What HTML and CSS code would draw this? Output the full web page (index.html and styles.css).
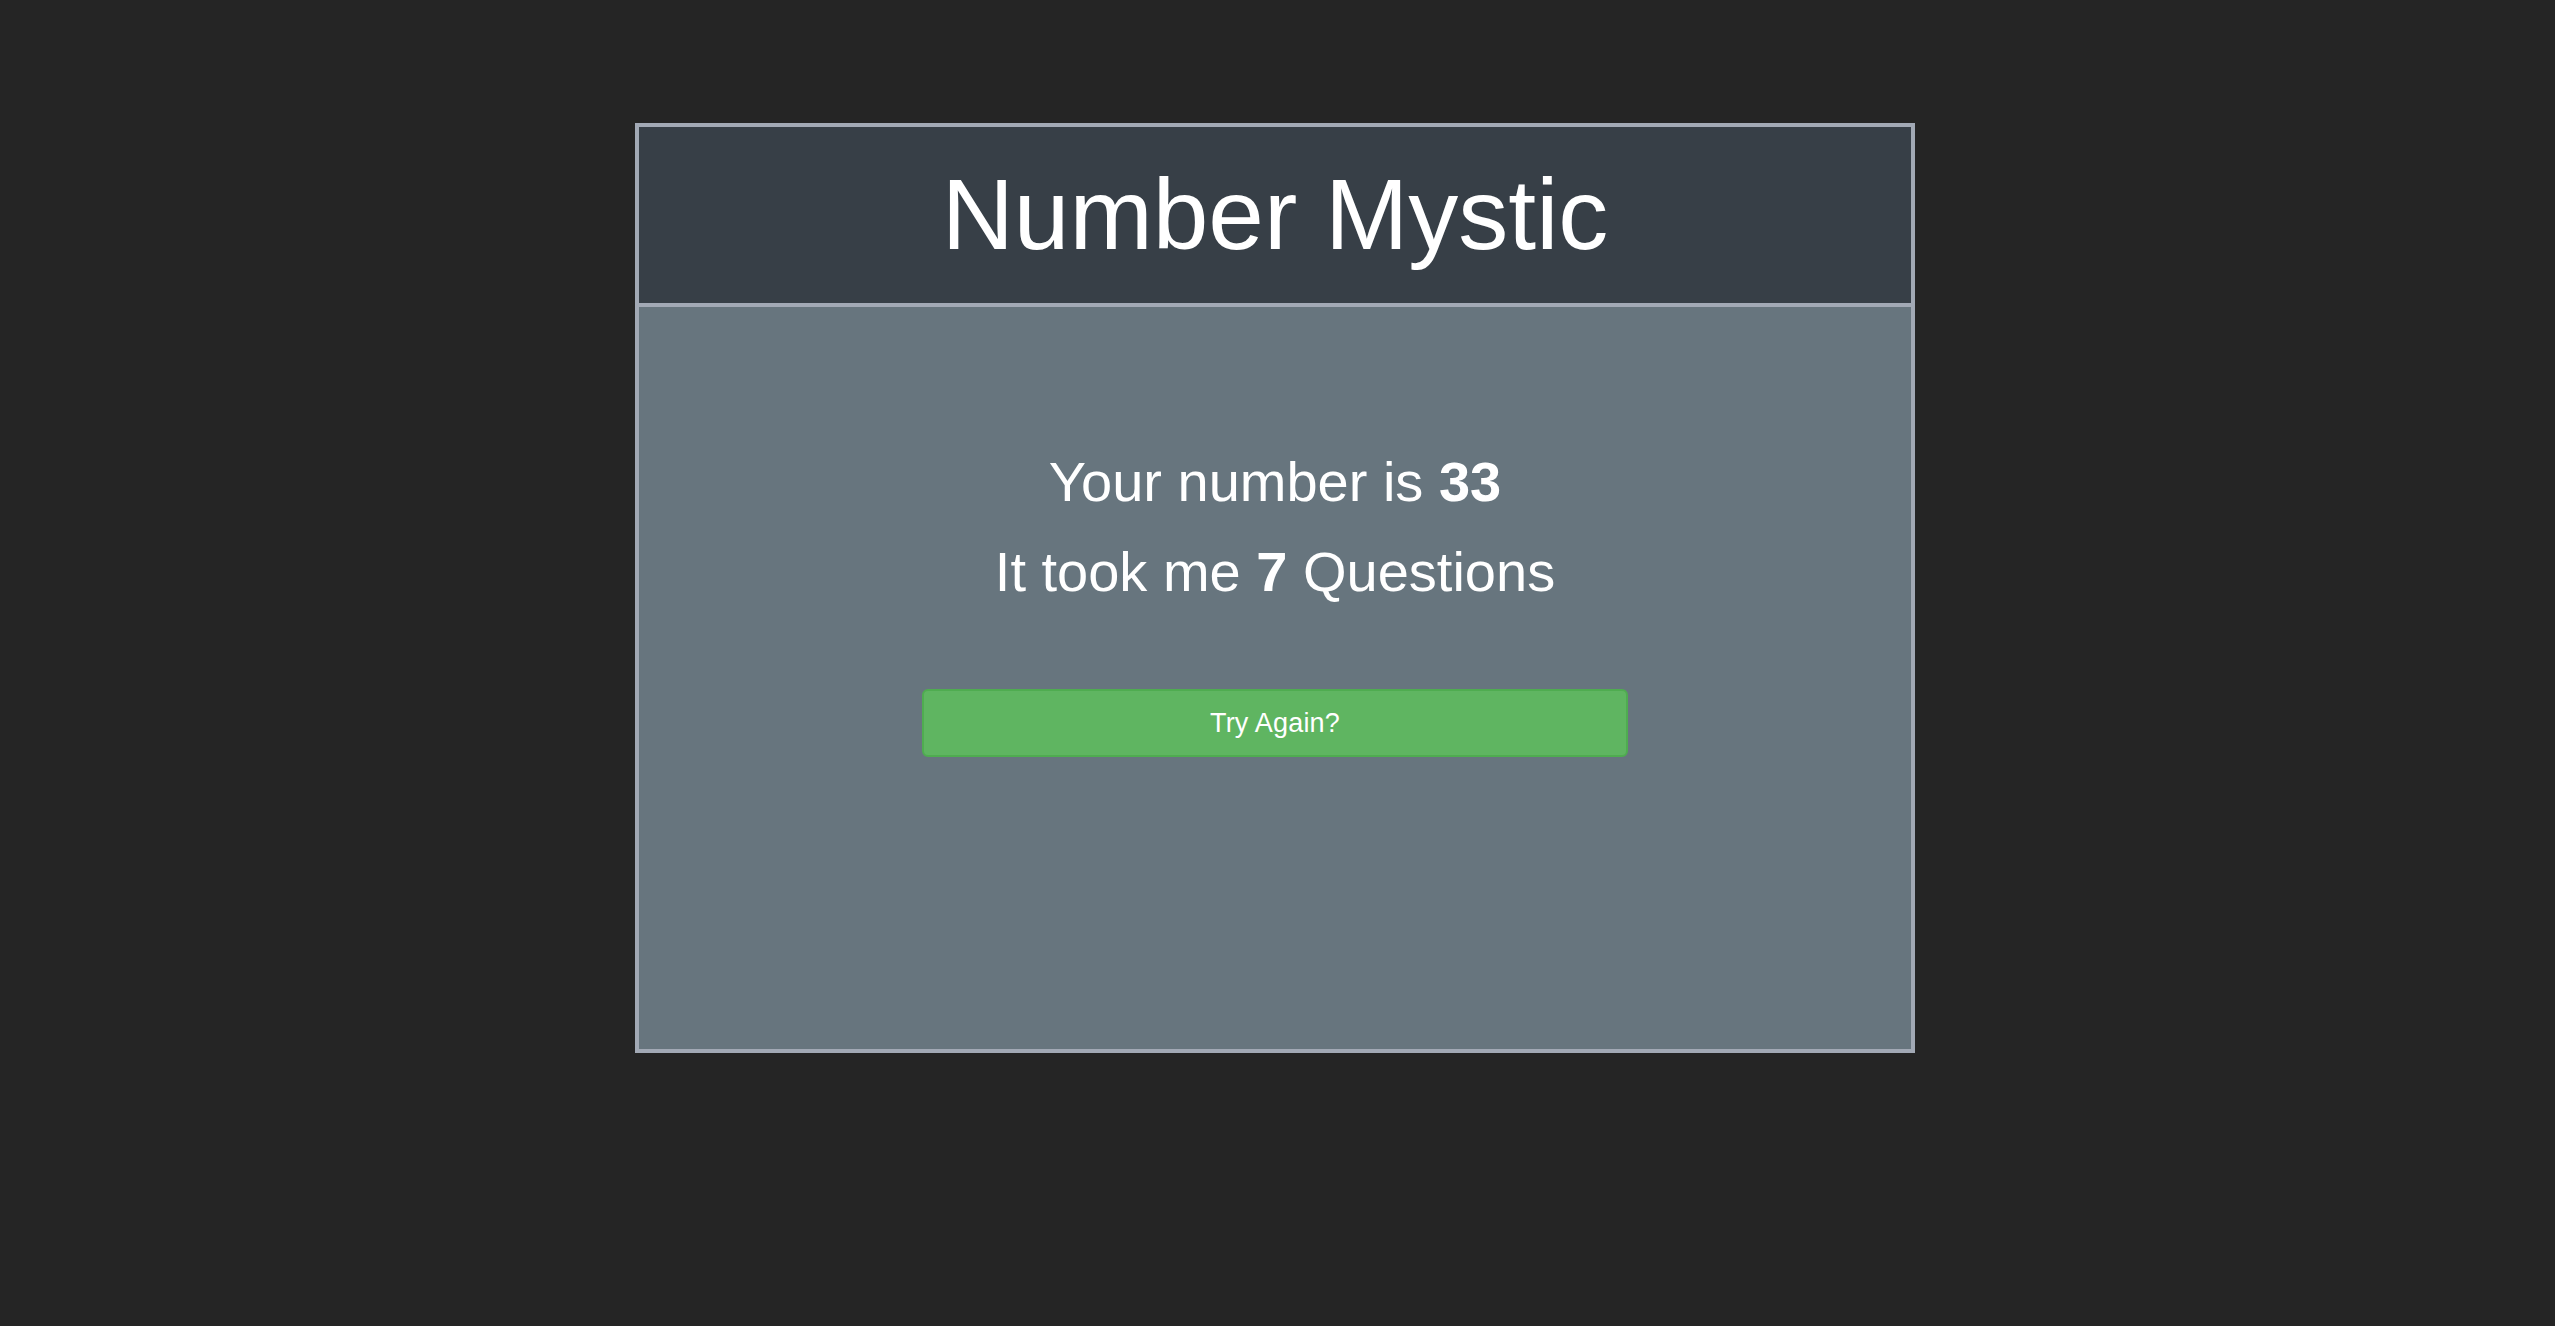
FILE: index.html
```html
<!DOCTYPE html>
<html lang="en">
<head>
<meta charset="utf-8">
<title>Number Mystic</title>
<link rel="stylesheet" href="styles.css">
</head>
<body>
<main class="card">
  <header class="card-header">
    <h1 class="title">Number Mystic</h1>
  </header>
  <section class="card-body">
    <p class="result">Your number is <strong>33</strong></p>
    <p class="result">It took me <strong>7</strong> Questions</p>
    <button class="btn-again" type="button">Try Again?</button>
  </section>
</main>
</body>
</html>
```
FILE: styles.css
```css
html, body {
  margin: 0;
  padding: 0;
}
body {
  background: #252525;
  font-family: "Liberation Sans", Arial, sans-serif;
  color: #ffffff;
  padding-top: 123px;
  min-height: 1326px;
  box-sizing: border-box;
}
.card {
  box-sizing: border-box;
  width: 1280px;
  margin-left: 635px;
  border: 4px solid #a2a9b5;
  display: flex;
  flex-direction: column;
}
.card-header {
  background: #373f47;
  height: 180px;
  box-sizing: border-box;
  border-bottom: 4px solid #a2a9b5;
  padding-top: 30px;
  text-align: center;
}
.title {
  margin: 0;
  font-size: 100px;
  line-height: 115px;
  font-weight: normal;
}
.card-body {
  background: #67757e;
  height: 742px;
  box-sizing: border-box;
  padding-top: 130px;
  display: flex;
  flex-direction: column;
  align-items: center;
}
.result {
  margin: 0;
  font-size: 56px;
  line-height: 90px;
}
.result strong {
  font-weight: bold;
}
.btn-again {
  margin-top: 72px;
  width: 706px;
  height: 68px;
  box-sizing: border-box;
  background: #5fb561;
  border: 2px solid #4fac50;
  border-radius: 6px;
  color: #ffffff;
  font-family: "Liberation Sans", Arial, sans-serif;
  font-size: 27px;
  letter-spacing: 0.2px;
  padding: 0;
  cursor: pointer;
}
```
